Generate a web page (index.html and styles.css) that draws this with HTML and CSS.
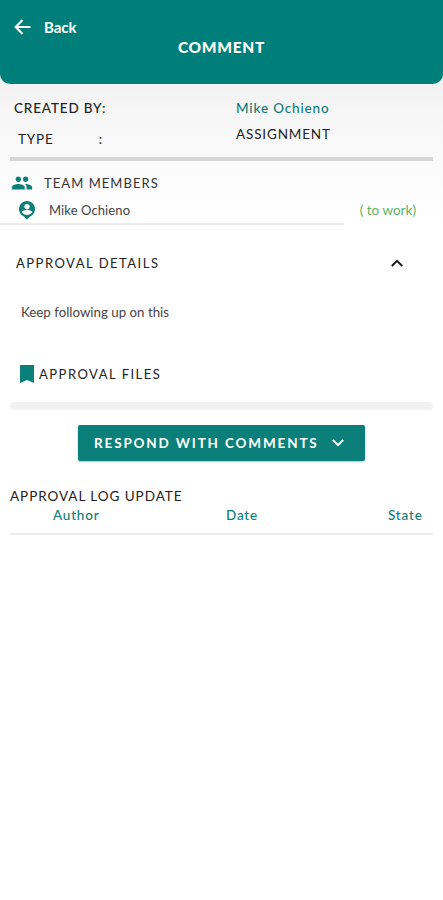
FILE: index.html
```html
<!DOCTYPE html>
<html lang="en">
<head>
  <meta charset="UTF-8">
  <meta name="viewport" content="width=device-width, initial-scale=1.0">
  <title>Comment</title>
  <link rel="stylesheet" href="styles.css">
</head>
<body>
  <header class="topbar">
    <div class="back">
      <svg class="back-icon" viewBox="0 0 18 18"><path d="M9 1.5 1.8 9 9 16.5M2 9h15.5" fill="none" stroke="#fff" stroke-width="2.2"/></svg>
      <span>Back</span>
    </div>
    <h1>COMMENT</h1>
  </header>

  <section class="summary">
    <div class="summary-row">
      <span class="summary-label">CREATED BY:</span>
      <span class="creator">Mike Ochieno</span>
    </div>
    <div class="summary-row type-row">
      <span class="type-label"><span>TYPE</span><span>:</span></span>
      <span class="type-value">ASSIGNMENT</span>
    </div>
  </section>
  <div class="rule-thick"></div>

  <section class="team">
    <div class="team-head">
      <svg class="team-icon" viewBox="0 0 24 24"><path d="M16 11c1.7 0 3-1.3 3-3s-1.3-3-3-3-3 1.300-3 3 1.300 3 3 3zm-8 0c1.700 0 3-1.300 3-3S9.700 5 8 5 5 6.300 5 8s1.300 3 3 3zm0 2c-2.300 0-7 1.200-7 3.500V19h14v-2.500C15 14.200 10.300 13 8 13zm8 0c-.3 0-.6 0-1 .1 1.200.8 2 2 2 3.400V19h6v-2.500c0-2.300-4.700-3.500-7-3.500z" fill="#0b7f79"/></svg>
      <span>TEAM MEMBERS</span>
    </div>
    <div class="member">
      <svg class="member-icon" viewBox="0 0 20 22"><path d="M10 1a9 9 0 0 0-3.600 17.200L10 21.500l3.600-3.300A9 9 0 0 0 10 1zm0 3.200a3 3 0 1 1 0 6 3 3 0 0 1 0-6zm0 12.300c-2.300 0-4.400-1.100-5.700-2.800.1-1.900 3.800-2.900 5.700-2.900s5.600 1 5.700 2.900c-1.300 1.700-3.400 2.800-5.700 2.800z" fill="#0b7f79"/></svg>
      <span class="member-name">Mike Ochieno</span>
      <span class="member-state">( to work)</span>
    </div>
  </section>
  <div class="rule-member"></div>

  <section class="details">
    <div class="details-head">
      <span>APPROVAL DETAILS</span>
      <svg class="chevron" viewBox="0 0 14 10"><path d="M1.800 8 7 2.800 12.200 8" fill="none" stroke="#1c1c1c" stroke-width="2"/></svg>
    </div>
    <p class="details-text">Keep following up on this</p>
    <div class="files-head">
      <svg class="bookmark" viewBox="0 0 14 18"><path d="M0 0h14v18l-7-3-7 3z" fill="#0b7f79"/></svg>
      <span>APPROVAL FILES</span>
    </div>
  </section>
  <div class="rule-light"></div>

  <div class="respond-wrap">
    <button class="respond">
      <span>RESPOND WITH COMMENTS</span>
      <svg class="respond-arrow" viewBox="0 0 14 10"><path d="M1.800 2 7 7.200 12.200 2" fill="none" stroke="#fff" stroke-width="2"/></svg>
    </button>
  </div>

  <section class="log">
    <h2>APPROVAL LOG UPDATE</h2>
    <div class="log-cols">
      <span class="col-author">Author</span>
      <span class="col-date">Date</span>
      <span class="col-state">State</span>
    </div>
  </section>
</body>
</html>
```

FILE: styles.css
```css
body {
  font-family: 'Lato', sans-serif;
  background: linear-gradient(180deg, #e6e6e6 0, #f6f6f6 110px, #fff 225px);
  background-repeat: no-repeat;
  background-color: #fff;
  color: #222;
  margin: 0;
  height: 900px;
  overflow: hidden;
}

/* Header */
.topbar {
  background: #007f7a;
  height: 84px;
  border-radius: 0 0 10px 10px;
  color: white;
  overflow: hidden;
}
.back {
  display: flex;
  align-items: center;
  padding: 18px 0 0 14px;
  height: 18px;
  font-size: 15px;
  font-weight: 700;
}
.back-icon {
  width: 17px;
  height: 18px;
  margin-right: 13px;
}
.topbar h1 {
  margin: 1px 0 0;
  font-size: 15.5px;
  font-weight: 900;
  letter-spacing: 0.7px;
  line-height: 20px;
  text-align: center;
}

/* Created by / type */
.summary {
  padding-top: 15px;
  height: 58px;
  font-size: 13.5px;
  letter-spacing: 0.85px;
}
.summary-row {
  display: flex;
  line-height: 18px;
}
.summary-label {
  width: 236px;
  padding-left: 14px;
  box-sizing: border-box;
  font-weight: 500;
}
.creator {
  color: #0f7c77;
  font-weight: 500;
}
.type-row {
  margin-top: 8px;
}
.type-label {
  display: flex;
  justify-content: space-between;
  width: 85px;
  margin: 5px 133px 0 18px;
  box-sizing: border-box;
}
.type-label span {
  display: block;
}
.rule-thick {
  height: 4px;
  margin: 0 10px;
  background: #d6d6d6;
}

/* Team */
.team {
  height: 62px;
}
.team-head {
  display: flex;
  align-items: center;
  padding: 13px 0 0 11px;
  height: 18px;
  font-size: 13px;
  letter-spacing: 1.05px;
  color: #333;
}
.team-icon {
  width: 22px;
  height: 22px;
  margin-right: 11px;
}
.member {
  display: flex;
  align-items: center;
  padding: 7px 27px 0 18px;
  height: 22px;
}
.member-icon {
  width: 18px;
  height: 20px;
  margin-right: 13px;
}
.member-name {
  flex: 1;
  font-size: 13px;
  letter-spacing: 0.1px;
  color: #444;
}
.member-state {
  font-size: 13.5px;
  color: #5cb262;
}
.rule-member {
  width: 344px;
  height: 2px;
  background: #ececec;
}

/* Approval details */
.details {
  height: 177px;
}
.details-head {
  display: flex;
  justify-content: space-between;
  align-items: center;
  padding: 29px 39px 0 16px;
  height: 18px;
  font-size: 13px;
  letter-spacing: 1.5px;
}
.chevron {
  width: 14px;
  height: 10px;
}
.details-text {
  margin: 32px 0 0 21px;
  font-size: 13.3px;
  line-height: 16px;
  color: #444;
}
.files-head {
  display: flex;
  align-items: center;
  margin: 45px 0 0 20px;
  height: 18px;
  font-size: 13px;
  letter-spacing: 1.5px;
}
.bookmark {
  width: 14px;
  height: 18px;
  margin-right: 5px;
}
.rule-light {
  height: 8px;
  margin: 0 10px;
  border-radius: 4px;
  background: #f1f1f1;
}

/* Button */
.respond-wrap {
  display: flex;
  justify-content: center;
  margin-top: 15px;
}
.respond {
  display: flex;
  align-items: center;
  justify-content: space-between;
  width: 287px;
  height: 36px;
  padding: 0 20px 0 16px;
  border: none;
  border-radius: 2px;
  background: #0b7f79;
  box-shadow: 0 1px 2px rgba(0, 0, 0, 0.25);
  color: white;
  font-family: inherit;
  font-size: 13.5px;
  font-weight: 700;
  letter-spacing: 1.85px;
}
.respond-arrow {
  width: 14px;
  height: 10px;
}

/* Log */
.log {
  padding-top: 26px;
  margin: 0 10px;
  height: 46px;
  border-bottom: 2px solid #ececec;
}
.log h2 {
  margin: 0;
  font-size: 13.5px;
  font-weight: 400;
  letter-spacing: 0.95px;
  line-height: 18px;
}
.log-cols {
  display: grid;
  grid-template-columns: 173px 162px auto;
  padding-left: 43px;
  margin-top: 2px;
  font-size: 13.5px;
  font-weight: 500;
  letter-spacing: 0.8px;
  line-height: 16px;
  color: #0f7c77;
}
```
